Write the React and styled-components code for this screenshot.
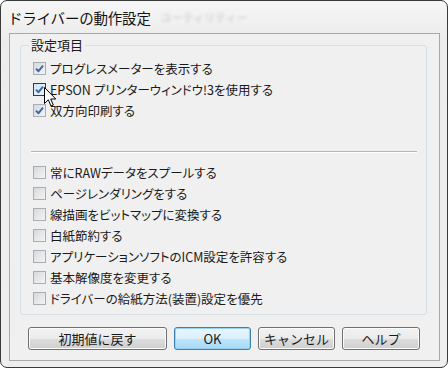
import React from "react";
import styled, { createGlobalStyle } from "styled-components";

const GlobalStyle = createGlobalStyle`
  html, body {
    margin: 0;
    padding: 0;
    background: #ffffff;
  }
  body {
    font-family: "Noto Sans CJK JP", "Liberation Sans", sans-serif;
  }
`;

const Window = styled.div`
  position: relative;
  box-sizing: border-box;
  width: 448px;
  height: 368px;
  display: flex;
  flex-direction: column;
  border: 1px solid #3a3a3a;
  border-radius: 7px;
  background: linear-gradient(180deg, #f6f6f6 0%, #ececec 10%, #eeeeee 100%);
  overflow: hidden;
`;

const TitleBar = styled.div`
  height: 32px;
  display: flex;
  align-items: center;
  padding-left: 7px;
  gap: 10px;
`;

const Title = styled.span`
  font-size: 14.5px;
  color: #111;
  letter-spacing: -0.2px;
`;

const GhostTitle = styled.span`
  font-size: 11px;
  color: #c8c8c8;
  filter: blur(1.4px);
`;

const Client = styled.div`
  flex: 1;
  margin: 0 7px 6px 8px;
  border: 1px solid #a9a9a9;
  background: #f0f0f0;
  display: flex;
  flex-direction: column;
  padding: 3px 12px 0 10px;
`;

const Group = styled.fieldset`
  margin: 0;
  padding: 5px 9px 5px 12px;
  border: 1px solid #d5dfe5;
  border-radius: 3px;
`;

const Legend = styled.legend`
  font-size: 13px;
  line-height: 16px;
  color: #1a1a1a;
  padding: 0 2px;
  margin-left: -4px;
`;

const Row = styled.div`
  height: 21px;
  display: flex;
  align-items: center;
  gap: 4px;
`;

const Box = styled.span`
  box-sizing: border-box;
  flex: none;
  width: 13px;
  height: 13px;
  display: flex;
  align-items: center;
  justify-content: center;
  border: 1px solid ${(p) => (p.$hover ? "#2c3e55" : "#a8aeb3")};
  background: ${(p) =>
    p.$hover
      ? "linear-gradient(135deg, #cfe4f5 0%, #eef6fc 100%)"
      : "linear-gradient(135deg, #d6d9dc 0%, #f3f4f5 100%)"};
`;

const Label = styled.span`
  font-size: 12.5px;
  color: #1a1a1a;
  font-feature-settings: "palt" 1;
  white-space: nowrap;
`;

const Separator = styled.div`
  height: 1px;
  background: #b5b5b5;
  border-bottom: 1px solid #ffffff;
  margin: 30px 0 9px -2px;
`;

const ButtonRow = styled.div`
  display: flex;
  gap: 7px;
  margin-top: 12px;
  padding-left: 8px;
`;

const Button = styled.button`
  box-sizing: border-box;
  width: ${(p) => p.$w}px;
  height: 23px;
  padding: 0;
  font-family: "Noto Sans CJK JP", "Liberation Sans", sans-serif;
  font-size: 13px;
  color: #1a1a1a;
  border-radius: 3px;
  border: 1px solid ${(p) => (p.$default ? "#3c7fb1" : "#707070")};
  background: ${(p) =>
    p.$default
      ? "linear-gradient(180deg, #eaf6fd 0%, #d9f0fc 50%, #bee6fd 51%, #a7d9f5 100%)"
      : "linear-gradient(180deg, #f2f2f2 0%, #ebebeb 50%, #dddddd 51%, #cfcfcf 100%)"};
  box-shadow: inset 0 0 0 1px ${(p) => (p.$default ? "#9ad2f0" : "#fcfcfc")};
`;

const Cursor = styled.svg`
  position: absolute;
  left: 43px;
  top: 86px;
`;

const CheckMark = () => (
  <svg width="9" height="9" viewBox="0 0 9 9">
    <path
      d="M1 4.6 L3.5 7.2 L8 1.6"
      fill="none"
      stroke="#3f68a8"
      strokeWidth="2"
      strokeLinejoin="round"
    />
  </svg>
);

const Check = ({ checked, hover, children }) => (
  <Row>
    <Box $hover={hover}>{checked && <CheckMark />}</Box>
    <Label>{children}</Label>
  </Row>
);

const topItems = [
  { text: "プログレスメーターを表示する", checked: true },
  { text: "EPSON プリンターウィンドウ!3を使用する", checked: true, hover: true },
  { text: "双方向印刷する", checked: true },
];

const bottomItems = [
  "常にRAWデータをスプールする",
  "ページレンダリングをする",
  "線描画をビットマップに変換する",
  "白紙節約する",
  "アプリケーションソフトのICM設定を許容する",
  "基本解像度を変更する",
  "ドライバーの給紙方法(装置)設定を優先",
];

export default function App() {
  return (
    <>
      <GlobalStyle />
      <Window>
        <TitleBar>
          <Title>ドライバーの動作設定</Title>
          <GhostTitle>ユーティリティー</GhostTitle>
        </TitleBar>
        <Client>
          <Group>
            <Legend>設定項目</Legend>
            {topItems.map((item) => (
              <Check key={item.text} checked={item.checked} hover={item.hover}>
                {item.text}
              </Check>
            ))}
            <Separator />
            {bottomItems.map((text) => (
              <Check key={text}>{text}</Check>
            ))}
          </Group>
          <ButtonRow>
            <Button $w={139}>初期値に戻す</Button>
            <Button $w={77} $default>
              OK
            </Button>
            <Button $w={77}>キャンセル</Button>
            <Button $w={78}>ヘルプ</Button>
          </ButtonRow>
        </Client>
        <Cursor width="13" height="21" viewBox="0 0 13 21">
          <path
            d="M0.5 0.5 L0.5 16.5 L4.3 12.8 L7 19 L9.3 18 L6.7 12 L11.8 12 Z"
            fill="#ffffff"
            stroke="#000000"
            strokeWidth="1"
            strokeLinejoin="round"
          />
        </Cursor>
      </Window>
    </>
  );
}
